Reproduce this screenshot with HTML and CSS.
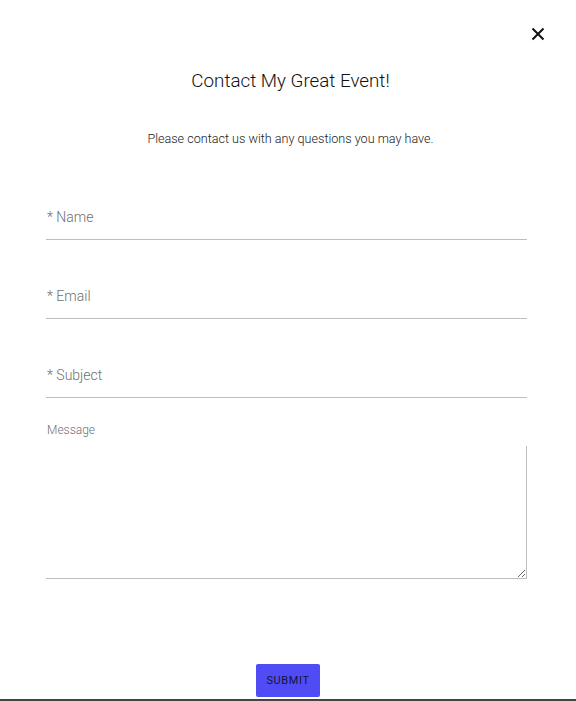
FILE: index.html
```html
<!DOCTYPE html>
<html lang="en">
<head>
<meta charset="utf-8">
<title>Contact My Great Event!</title>
<link rel="stylesheet" href="styles.css">
</head>
<body>
<div class="modal">
  <div class="topbar">
    <button class="close" aria-label="Close">
      <svg width="14" height="14" viewBox="0 0 14 14"><path d="M1.5 1.5 L12.5 12.5 M12.5 1.5 L1.5 12.5" stroke="#111" stroke-width="2" fill="none"/></svg>
    </button>
  </div>
  <h1 class="title">Contact My Great Event!</h1>
  <p class="subtitle">Please contact us with any questions you may have.</p>
  <form class="form">
    <input class="field" type="text" placeholder="* Name">
    <input class="field" type="email" placeholder="* Email">
    <input class="field" type="text" placeholder="* Subject">
    <label class="msg-label">Message</label>
    <textarea class="message"></textarea>
    <div class="actions">
      <button type="button" class="submit">SUBMIT</button>
    </div>
  </form>
</div>
</body>
</html>
```

FILE: styles.css
```css
html, body {
  margin: 0;
  padding: 0;
  background: #fff;
}
body {
  font-family: Roboto, "Liberation Sans", sans-serif;
  color: #222;
}
.modal {
  box-sizing: border-box;
  height: 701px;
  border-bottom: 2px solid #444;
  padding: 0 49px 0 46px;
  display: flex;
  flex-direction: column;
}
.topbar {
  display: flex;
  justify-content: flex-end;
  padding-top: 27px;
  margin-right: -18px;
}
.close {
  border: 0;
  background: none;
  padding: 0;
  width: 14px;
  height: 14px;
  cursor: pointer;
}
.close svg { display: block; }
.title {
  margin: 28px 0 0 8px;
  font-size: 18.8px;
  font-weight: 300;
  line-height: 24px;
  text-align: center;
  color: #111;
}
.subtitle {
  margin: 38px 0 0 8px;
  font-size: 12.6px;
  font-weight: 300;
  line-height: 16px;
  text-align: center;
  color: #222;
}
.form {
  display: flex;
  flex-direction: column;
  margin-top: 47px;
}
.field {
  box-sizing: border-box;
  height: 46px;
  border: 0;
  border-bottom: 1px solid #bdbdbd;
  padding: 0 0 0 1px;
  margin: 0 0 33px 0;
  font-family: Roboto, "Liberation Sans", sans-serif;
  font-size: 14px;
  font-weight: 300;
  color: #333;
  outline: none;
  background: transparent;
}
.field::placeholder {
  color: #6f6f6f;
  opacity: 1;
}
.field:last-of-type { margin-bottom: 24px; }
.msg-label {
  font-size: 12px;
  font-weight: 300;
  line-height: 16px;
  color: #6f6f6f;
  padding-left: 1px;
}
.message {
  box-sizing: border-box;
  height: 133px;
  margin-top: 8px;
  border: 0;
  border-right: 1px solid #bdbdbd;
  border-bottom: 1px solid #bdbdbd;
  resize: vertical;
  outline: none;
  font-family: Roboto, "Liberation Sans", sans-serif;
}
.actions {
  display: flex;
  justify-content: center;
  margin-top: 85px;
  padding-left: 3px;
}
.submit {
  width: 64px;
  height: 33px;
  border: 0;
  border-radius: 2px;
  background: #4f4cf5;
  color: #141433;
  font-family: Roboto, "Liberation Sans", sans-serif;
  font-size: 11px;
  font-weight: 400;
  letter-spacing: 0.6px;
  cursor: pointer;
}
```
